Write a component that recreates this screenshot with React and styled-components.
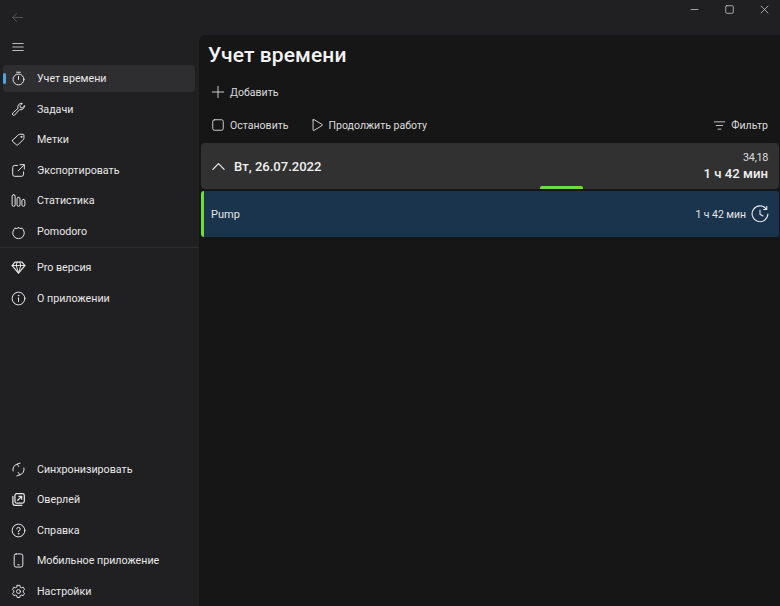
import React from "react";
import styled, { createGlobalStyle } from "styled-components";

const Global = createGlobalStyle`
  html, body { margin: 0; padding: 0; background: #201f21; }
  body { font-family: Roboto, "Noto Sans", sans-serif; color: #e8e8e8; }
`;

const Win = styled.div`
  width: 780px;
  height: 606px;
  background: #201f21;
  display: flex;
  flex-direction: column;
  overflow: hidden;
`;

const TitleBar = styled.div`
  height: 35px;
  flex: none;
  display: flex;
  align-items: center;
  justify-content: space-between;
  padding: 0 11px 0 11px;
  box-sizing: border-box;
`;

const WinButtons = styled.div`
  display: flex;
  gap: 24px;
  margin-top: -17px;
  margin-right: -1px;
  color: #d8d8d8;
`;

const Body = styled.div`
  flex: 1;
  display: flex;
  min-height: 0;
`;

const Sidebar = styled.nav`
  width: 199px;
  flex: none;
  display: flex;
  flex-direction: column;
  padding: 0 4px 0 3px;
  box-sizing: border-box;
`;

const Burger = styled.div`
  height: 29.5px;
  flex: none;
  display: flex;
  align-items: center;
  padding: 0 0 5px 8px;
  box-sizing: border-box;
  color: #b9b9b9;
`;

const NavGroup = styled.div`
  display: flex;
  flex-direction: column;
  flex: none;
  margin-bottom: ${(p) => p.$bottom || 0}px;
`;

const Divider = styled.div`
  height: 1px;
  background: #2d2c2f;
  margin: -1.5px -4px 6px -3px;
`;

const NavItem = styled.div`
  position: relative;
  height: 27px;
  margin-bottom: 3.6px;
  flex: none;
  display: flex;
  align-items: center;
  gap: 11px;
  padding: 1px 0 0 8px;
  box-sizing: border-box;
  border-radius: 4px;
  font-size: 10.7px;
  color: #e8e8e8;
  background: ${(p) => (p.$active ? "#2e2d30" : "transparent")};
`;

const Pill = styled.span`
  position: absolute;
  left: 0;
  top: 8px;
  width: 2.5px;
  height: 11px;
  border-radius: 2px;
  background: #4ea3e0;
`;

const Spacer = styled.div`
  flex: 1;
`;

const Main = styled.main`
  flex: 1;
  background: #161616;
  border-top-left-radius: 7px;
  padding: 0 1px 0 2px;
  display: flex;
  flex-direction: column;
  min-width: 0;
`;

const Title = styled.h1`
  margin: 5px 0 0 7px;
  height: 30px;
  font-size: 21px;
  line-height: 30px;
  font-weight: 500;
  letter-spacing: 0.1px;
  color: #f4f4f4;
`;

const ToolRow = styled.div`
  display: flex;
  align-items: center;
  height: 20px;
  padding: 0 11px 0 10px;
  margin-top: ${(p) => p.$top}px;
`;

const Tool = styled.div`
  display: flex;
  align-items: center;
  gap: 5px;
  margin-right: ${(p) => p.$right || 0}px;
  margin-left: ${(p) => (p.$end ? "auto" : "0")};
  font-size: 10.55px;
  color: #dcdcdc;
`;

const Group = styled.div`
  position: relative;
  height: 46px;
  margin-top: 8px;
  background: #313131;
  border-radius: 4px;
  display: flex;
  align-items: center;
  justify-content: space-between;
  padding: 0 11px 0 10px;
`;

const GroupLeft = styled.div`
  display: flex;
  align-items: center;
  gap: 8px;
  font-size: 13.05px;
  font-weight: 500;
  color: #f0f0f0;
`;

const GroupRight = styled.div`
  display: flex;
  flex-direction: column;
  align-items: flex-end;
  line-height: 16px;
`;

const Small = styled.span`
  font-size: 10.8px;
  letter-spacing: -0.3px;
  color: #dddddd;
`;

const Strong = styled.span`
  font-size: 13.2px;
  font-weight: 500;
  color: #f0f0f0;
`;

const GreenTab = styled.span`
  position: absolute;
  left: 339px;
  bottom: 0;
  width: 43px;
  height: 3px;
  border-radius: 2px 2px 0 0;
  background: #6cdf39;
`;

const Row = styled.div`
  height: 46px;
  margin-top: 2px;
  background: #1a344e;
  border-left: 3px solid #6cdf39;
  border-radius: 3px;
  display: flex;
  align-items: center;
  justify-content: space-between;
  padding: 0 10px 0 7px;
  font-size: 11px;
  color: #e6e6e6;
`;

const RowRight = styled.div`
  display: flex;
  align-items: center;
  gap: 5px;
  font-size: 10.4px;
`;

const Ico = ({ size = 15, sw = 1.05, children }) => (
  <svg width={size} height={size} viewBox="0 0 16 16" fill="none" stroke="currentColor" strokeWidth={sw} strokeLinecap="round" strokeLinejoin="round" style={{ flex: "none" }}>
    {children}
  </svg>
);

const icons = {
  timer: <><circle cx="8" cy="9" r="5.8" /><path d="M6 1.3h4M8 9V5.6" /></>,
  wrench: <path d="M14.3 4.2a3.9 3.9 0 0 1-5.2 3.9L3.9 13.9a1.5 1.5 0 0 1-2.2-2L7.5 6.7a3.9 3.9 0 0 1 4.5-5.2L9.6 4l.6 1.9 1.9.6 2.2-2.3z" />,
  tag: <><path d="M1.6 8.8 8 2.9c.4-.3.8-.5 1.3-.5h3.6c.5 0 .9.4.9.9v3.5c0 .5-.2 1-.6 1.3l-6 5.6c-.4.3-1 .3-1.3 0L1.6 10c-.3-.4-.3-.9 0-1.2z" /><circle cx="11" cy="5.2" r=".6" /></>,
  share: <><path d="M7 2.6H4a2.2 2.2 0 0 0-2.2 2.2V12A2.2 2.2 0 0 0 4 14.2h7.2a2.2 2.2 0 0 0 2.2-2.2V9.4" /><path d="M9.6 1.8h4.6v4.6M14 2 7.6 8.4" /></>,
  stats: <><rect x="1.2" y="1.8" width="3.2" height="12.4" rx="1.6" /><rect x="6.4" y="4.6" width="3.2" height="9.6" rx="1.6" /><rect x="11.6" y="6.8" width="3.2" height="7.4" rx="1.6" /></>,
  tomato: <><path d="M4.4 4.4a6.2 6.2 0 1 0 7.2 0" /><path d="M4.4 4.4c1.4.9 2.6.5 3.6-.9 1 1.4 2.2 1.8 3.6.9" fill="currentColor" /></>,
  gem: <><path d="M4.2 2.2h7.6l3 3.7L8 14 1.2 5.9z" strokeWidth="1.3" /><path d="M1.2 5.9h13.6M5.6 5.9 8 14l2.4-8.1M5.6 5.9l1-3.7M10.4 5.9l-1-3.7" /></>,
  info: <><circle cx="8" cy="8" r="6.8" /><path d="M8 7.2v4" /><circle cx="8" cy="4.9" r=".35" fill="currentColor" /></>,
  sync: <><path d="M2.2 9.6A6 6 0 0 1 6.4 2.2M13.8 6.4A6 6 0 0 1 9.6 13.8" /><path d="M9.8 1.2 6.6 2.2l1.6 2.6M6.2 14.8l3.2-1-1.6-2.6" /></>,
  overlay: <><rect x="4.2" y="1.8" width="10" height="10" rx="2" strokeWidth="1.3" /><path d="M2 4.6v7.2A2.4 2.4 0 0 0 4.4 14.2h7.2" strokeWidth="1.3" /><path d="M7.2 8.8l4-4M8.4 4.6h3v3" strokeWidth="1.3" /></>,
  help: <><circle cx="8" cy="8" r="6.8" /><path d="M6.1 6.2A1.9 1.9 0 1 1 8 8.4v1" /><circle cx="8" cy="11.5" r=".35" fill="currentColor" /></>,
  phone: <><rect x="3.4" y="1" width="9.2" height="14" rx="2" /><path d="M7.2 12.6h1.6" /></>,
  gear: <><circle cx="8" cy="8" r="2.1" /><path d="M6.6 1.4h2.8l.4 1.9 1.3.7 1.9-.6 1.4 2.4-1.4 1.3v1.6l1.4 1.3-1.4 2.4-1.9-.6-1.3.7-.4 1.9H6.6l-.4-1.9-1.3-.7-1.9.6L1.6 10l1.4-1.3V7.1L1.6 5.8 3 3.4l1.9.6 1.3-.7z" /></>,
};

const topItems = [
  ["timer", "Учет времени", true],
  ["wrench", "Задачи"],
  ["tag", "Метки"],
  ["share", "Экспортировать"],
  ["stats", "Статистика"],
  ["tomato", "Pomodoro"],
];
const midItems = [["gem", "Pro версия"], ["info", "О приложении"]];
const bottomItems = [
  ["sync", "Синхронизировать"],
  ["overlay", "Оверлей"],
  ["help", "Справка"],
  ["phone", "Мобильное приложение"],
  ["gear", "Настройки"],
];

const renderItem = ([icon, label, active]) => (
  <NavItem key={label} $active={active}>
    {active && <Pill />}
    <Ico>{icons[icon]}</Ico>
    {label}
  </NavItem>
);

export default function App() {
  return (
    <Win>
      <Global />
      <TitleBar>
        <span style={{ color: "#5d5c5f", display: "flex" }}>
          <Ico size={13}><path d="M14 8H2M7 3 2 8l5 5" /></Ico>
        </span>
        <WinButtons>
          <Ico size={11}><path d="M3 8h10" /></Ico>
          <Ico size={11}><rect x="2.5" y="2.5" width="11" height="11" rx="1.5" /></Ico>
          <Ico size={11}><path d="M3 3l10 10M13 3 3 13" /></Ico>
        </WinButtons>
      </TitleBar>
      <Body>
        <Sidebar>
          <Burger>
            <Ico size={14} sw={1.2}><path d="M2 4h12M2 8h12M2 12h12" /></Ico>
          </Burger>
          <NavGroup>{topItems.map(renderItem)}</NavGroup>
          <Divider />
          <NavGroup>{midItems.map(renderItem)}</NavGroup>
          <Spacer />
          <NavGroup $bottom={-2}>{bottomItems.map(renderItem)}</NavGroup>
        </Sidebar>
        <Main>
          <Title>Учет времени</Title>
          <ToolRow $top={12}>
            <Tool><Ico size={14}><path d="M8 1.5v13M1.5 8h13" /></Ico>Добавить</Tool>
          </ToolRow>
          <ToolRow $top={13}>
            <Tool $right={21}><Ico size={14}><rect x="2" y="2" width="12" height="12" rx="2" /></Ico>Остановить</Tool>
            <Tool><Ico size={14}><path d="M3.5 2.2v11.6c0 .5.5.7.9.5l9.6-5.8c.4-.2.4-.8 0-1L4.4 1.7c-.4-.2-.9 0-.9.5z" /></Ico>Продолжить работу</Tool>
            <Tool $end><Ico size={13}><path d="M1.5 3.5h13M4 8h8M6.2 12.5h3.6" /></Ico>Фильтр</Tool>
          </ToolRow>
          <Group>
            <GroupLeft>
              <Ico size={15} sw={1.3}><path d="M2 11l6-6 6 6" /></Ico>
              Вт, 26.07.2022
            </GroupLeft>
            <GroupRight>
              <Small>34,18</Small>
              <Strong>1 ч 42 мин</Strong>
            </GroupRight>
            <GreenTab />
          </Group>
          <Row>
            Pump
            <RowRight>
              1 ч 42 мин
              <Ico size={18} sw={1}>
                <path d="M13.6 3.6A7 7 0 1 0 15 8" />
                <path d="M14 1.2v2.8h-2.8M8 4.4V8.2l2.6 1.6" />
              </Ico>
            </RowRight>
          </Row>
        </Main>
      </Body>
    </Win>
  );
}
